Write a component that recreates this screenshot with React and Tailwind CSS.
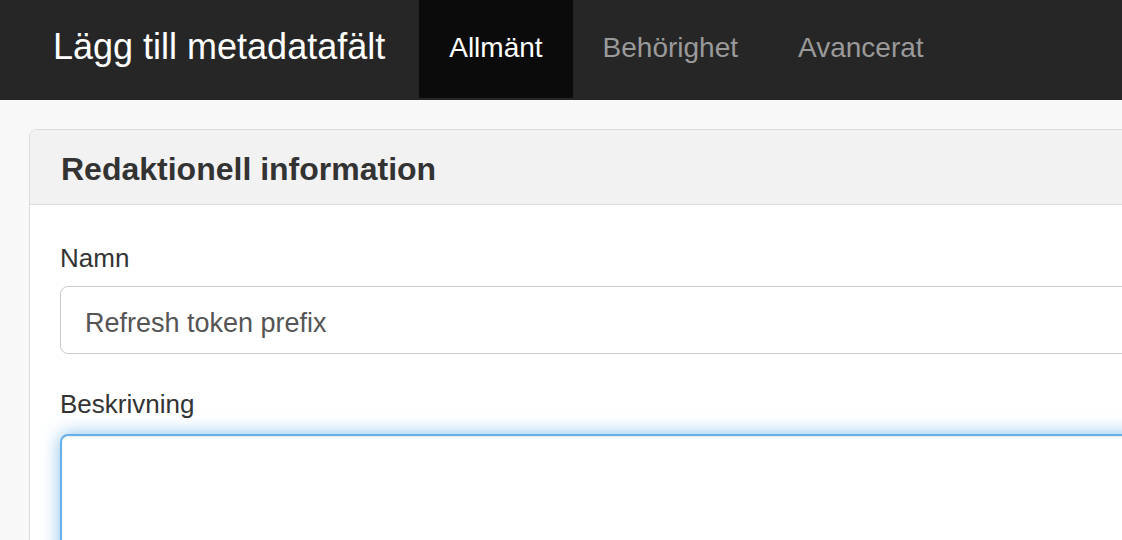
export default function App() {
  return (
    <div
      className="w-screen h-[540px] overflow-hidden bg-[#f8f8f8]"
      style={{ fontFamily: '"Liberation Sans", Arial, Helvetica, sans-serif' }}
    >
      <header className="flex h-[100px] bg-[#262626] pl-[53px]">
        <div className="pt-[27px] text-[36px] leading-[40px] text-white whitespace-nowrap">
          Lägg till metadatafält
        </div>
        <nav className="ml-[34px] flex h-[98px]">
          <a className="block h-[98px] bg-[#0b0b0b] px-[30px] pt-[28px] text-[28px] leading-[40px] text-white whitespace-nowrap">
            Allmänt
          </a>
          <a className="block h-[98px] px-[30px] pt-[28px] text-[28px] leading-[40px] text-[#9a9a9a] whitespace-nowrap">
            Behörighet
          </a>
          <a className="block h-[98px] px-[30px] pt-[28px] text-[28px] leading-[40px] text-[#9a9a9a] whitespace-nowrap">
            Avancerat
          </a>
        </nav>
      </header>

      <main className="pl-[29px] pt-[29px]">
        <section className="w-[1200px] rounded-[8px] border border-[#dcdcdc] bg-white">
          <div className="rounded-t-[8px] border-b border-[#dcdcdc] bg-[#f2f2f2] px-[31px] pt-[21px] pb-[17px]">
            <h3 className="text-[32px] font-bold leading-[36px] text-[#333333]">
              Redaktionell information
            </h3>
          </div>
          <div className="px-[30px] pt-[33px] pb-[30px]">
            <label className="mb-[8px] block text-[26px] leading-[40px] text-[#333333]">
              Namn
            </label>
            <input
              type="text"
              readOnly
              defaultValue="Refresh token prefix"
              className="block h-[68px] w-full rounded-[8px] border border-[#cccccc] bg-white px-[24px] pt-[6px] pb-0 text-[27px] text-[#555555] outline-none"
              style={{ fontFamily: '"Liberation Sans", Arial, Helvetica, sans-serif' }}
            />
            <label className="mt-[30px] mb-[10px] block text-[26px] leading-[40px] text-[#333333]">
              Beskrivning
            </label>
            <textarea
              className="block h-[200px] w-full resize-none rounded-[8px] border-2 border-[#66afe9] bg-white px-[24px] py-[12px] text-[27px] text-[#555555] outline-none shadow-[inset_0_1px_1px_rgba(0,0,0,0.075),0_0_18px_rgba(102,175,233,0.8)]"
            />
          </div>
        </section>
      </main>
    </div>
  );
}
